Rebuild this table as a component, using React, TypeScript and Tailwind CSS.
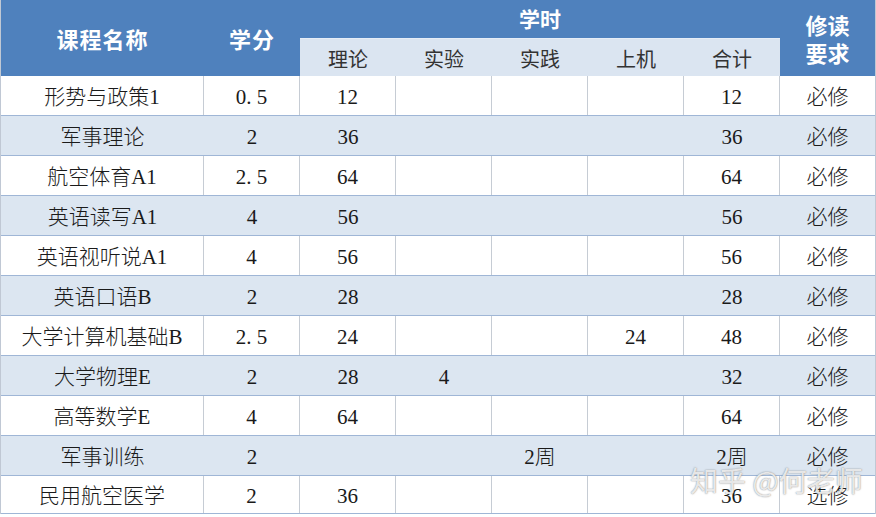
import React from 'react';

const cols = 'grid grid-cols-[203px_96px_96px_96px_96px_96px_96px_95px]';

const rows: string[][] = [
  ['形势与政策1', '0. 5', '12', '', '', '', '12', '必修'],
  ['军事理论', '2', '36', '', '', '', '36', '必修'],
  ['航空体育A1', '2. 5', '64', '', '', '', '64', '必修'],
  ['英语读写A1', '4', '56', '', '', '', '56', '必修'],
  ['英语视听说A1', '4', '56', '', '', '', '56', '必修'],
  ['英语口语B', '2', '28', '', '', '', '28', '必修'],
  ['大学计算机基础B', '2. 5', '24', '', '', '24', '48', '必修'],
  ['大学物理E', '2', '28', '4', '', '', '32', '必修'],
  ['高等数学E', '4', '64', '', '', '', '64', '必修'],
  ['军事训练', '2', '', '', '2周', '', '2周', '必修'],
  ['民用航空医学', '2', '36', '', '', '', '36', '选修'],
];

const subHeads = ['理论', '实验', '实践', '上机', '合计'];

function HeaderRow() {
  return (
    <div className={`${cols} grid-rows-[38px_38px] bg-[#4f81bd] text-white font-['Noto_Sans_CJK_SC',sans-serif]`}>
      <div className="row-span-2 flex items-center justify-center text-[22px] font-bold tracking-[1px]">课程名称</div>
      <div className="row-span-2 flex items-center justify-center text-[22px] font-bold tracking-[1px]">学分</div>
      <div className="col-span-5 flex items-center justify-center text-[21px] font-bold">学时</div>
      <div className="row-span-2 flex flex-col items-center justify-center text-[22px] font-bold leading-[28px]">
        <span>修读</span>
        <span>要求</span>
      </div>
      {subHeads.map((h) => (
        <div key={h} className="flex items-center justify-center pt-[2px] bg-[#dbe5f1] text-[20px] text-[#333] border-t border-[#e6edf6]">
          {h}
        </div>
      ))}
    </div>
  );
}

function BodyRow({ cells, band, last }: { cells: string[]; band: boolean; last: boolean }) {
  return (
    <div
      className={`${cols} ${last ? 'h-[38px]' : 'h-[40px]'} border-b border-[#9fb6d6] ${
        band ? 'bg-[#dce6f1]' : 'bg-white'
      }`}
    >
      {cells.map((c, i) => (
        <div
          key={i}
          className={`flex items-center justify-center pt-[5px] text-[21px] font-light text-[#1a1a1a] whitespace-pre ${
            !band && i < 7 ? 'border-r border-[#c6ccd4]' : ''
          }`}
        >
          {c}
        </div>
      ))}
    </div>
  );
}

export default function App() {
  return (
    <div className="relative w-[876px] h-[517px] overflow-hidden bg-white">
      <div className="w-[876px] border-l border-r border-[#c0c8d4] font-['Liberation_Serif','Noto_Sans_CJK_SC',sans-serif]">
        <HeaderRow />
        {rows.map((r, i) => (
          <BodyRow key={i} cells={r} band={i % 2 === 1} last={i === rows.length - 1} />
        ))}
      </div>
      <div className="absolute left-[690px] top-[466px] text-[28px] leading-none text-white/80 font-['Noto_Sans_CJK_SC',sans-serif] [text-shadow:0_0_1px_rgba(80,80,80,0.6),0_0_2px_rgba(120,120,120,0.4)] whitespace-nowrap">
        知乎 @何老师
      </div>
    </div>
  );
}
